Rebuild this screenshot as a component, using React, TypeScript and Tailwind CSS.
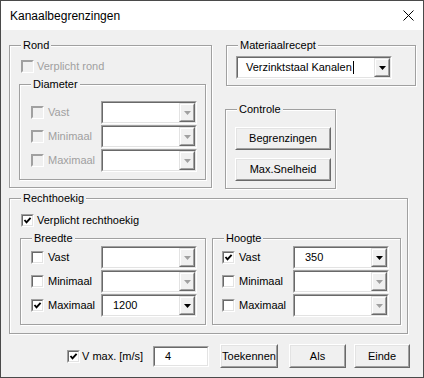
import React from "react";

const LABEL_DIS = "text-[#a0a0a0]";

function Group({
  label,
  className,
  children,
}: {
  label: string;
  className: string;
  children?: React.ReactNode;
}) {
  return (
    <div
      className={`relative border border-[#a0a0a0] shadow-[inset_1px_1px_0_#ffffff,1px_1px_0_#ffffff] ${className}`}
    >
      <span className="absolute top-[-8px] left-[11px] px-[2px] bg-[#f0f0f0] leading-[14px] text-black">
        {label}
      </span>
      {children}
    </div>
  );
}

function Check({ checked, disabled }: { checked?: boolean; disabled?: boolean }) {
  return (
    <span
      className={`block shrink-0 w-[13px] h-[13px] border ${
        disabled
          ? "border-t-[#a0a0a0] border-l-[#a0a0a0] border-b-white border-r-white"
          : "border-t-[#a0a0a0] border-l-[#a0a0a0] border-b-white border-r-white"
      }`}
    >
      <span
        className={`block w-full h-full border ${
          disabled
            ? "border-t-[#a0a0a0] border-l-[#a0a0a0] border-b-[#f0f0f0] border-r-[#f0f0f0] bg-[#f0f0f0]"
            : "border-t-[#696969] border-l-[#696969] border-b-[#e3e3e3] border-r-[#e3e3e3] bg-white"
        }`}
      >
        {checked && (
          <svg width="9" height="9" viewBox="0 0 9 9" className="block">
            <path d="M1.5 4 L3.5 6.3 L7.6 1.8" stroke="#000" strokeWidth="1.9" fill="none" />
          </svg>
        )}
      </span>
    </span>
  );
}

function Sunken({
  className,
  children,
}: {
  className: string;
  children?: React.ReactNode;
}) {
  return (
    <div
      className={`flex border border-t-[#a0a0a0] border-l-[#a0a0a0] border-b-white border-r-white ${className}`}
    >
      <div className="flex flex-1 min-w-0 border border-t-[#696969] border-l-[#696969] border-b-[#e3e3e3] border-r-[#e3e3e3] bg-white">
        {children}
      </div>
    </div>
  );
}

function Combo({
  value,
  enabled,
  w = "w-[96px]",
  pl = "pl-[10px]",
  caret,
}: {
  value?: string;
  enabled?: boolean;
  w?: string;
  pl?: string;
  caret?: boolean;
}) {
  return (
    <Sunken className={`${w} h-[23px]`}>
      <div className={`flex-1 flex items-center ${pl} text-black leading-none`}>
        {value}
        {caret && <span className="inline-block w-[1px] h-[13px] bg-black ml-[1px]" />}
      </div>
      <div className="w-[16px] h-full border border-t-[#e3e3e3] border-l-[#e3e3e3] border-b-[#696969] border-r-[#696969] bg-[#f0f0f0]">
        <div className="w-full h-full border border-t-white border-l-white border-b-[#a0a0a0] border-r-[#a0a0a0] flex items-center justify-center">
          <svg width="7" height="4" viewBox="0 0 7 4" className="block">
            <path d="M0 0 H7 L3.5 4 Z" fill={enabled ? "#000" : "#a0a0a0"} />
          </svg>
        </div>
      </div>
    </Sunken>
  );
}

function Button({ label, className }: { label: string; className: string }) {
  return (
    <div
      className={`border border-t-white border-l-white border-b-[#696969] border-r-[#696969] bg-[#f0f0f0] ${className}`}
    >
      <div className="w-full h-full border border-t-[#e3e3e3] border-l-[#e3e3e3] border-b-[#a0a0a0] border-r-[#a0a0a0] flex items-center justify-center text-black">
        {label}
      </div>
    </div>
  );
}

function Row({
  label,
  checked,
  disabled,
  comboEnabled,
  value,
  labelW,
}: {
  label: string;
  checked?: boolean;
  disabled?: boolean;
  comboEnabled?: boolean;
  value?: string;
  labelW: string;
}) {
  return (
    <div className="flex items-center h-[23px]">
      <Check checked={checked} disabled={disabled} />
      <span className={`ml-[4px] ${labelW} ${disabled ? LABEL_DIS : "text-black"}`}>{label}</span>
      <Combo value={value} enabled={comboEnabled} />
    </div>
  );
}

export default function App() {
  return (
    <div className="w-[424px] h-[378px] border border-[#4a4a4a] bg-[#f0f0f0] flex flex-col font-['Liberation_Sans',Arial,sans-serif] text-[11px] leading-[13px] select-none">
      {/* title bar */}
      <div className="h-[29px] bg-white flex items-center justify-between pl-[9px] pr-[8px]">
        <span className="text-[12px] text-black leading-none">Kanaalbegrenzingen</span>
        <svg width="11" height="11" viewBox="0 0 11 11" className="block mr-[1px]">
          <path d="M0.5 0.5 L10.5 10.5 M10.5 0.5 L0.5 10.5" stroke="#000" strokeWidth="1" />
        </svg>
      </div>

      <div className="flex flex-col pl-[8px]">
        {/* top row */}
        <div className="flex items-start mt-[15px]">
          <Group label="Rond" className="w-[203px] h-[143px] pl-[9px] pt-[14px]">
            <div className="flex items-center ml-[2px] h-[13px]">
              <Check disabled />
              <span className={`ml-[3px] ${LABEL_DIS}`}>Verplicht rond</span>
            </div>
            <Group label="Diameter" className="mt-[11px] w-[187px] h-[96px] pl-[11px] pt-[16px]">
              <div className="flex flex-col gap-[1px]">
                <Row label="Vast" disabled labelW="w-[53px]" />
                <Row label="Minimaal" disabled labelW="w-[53px]" />
                <Row label="Maximaal" disabled labelW="w-[53px]" />
              </div>
            </Group>
          </Group>

          <div className="ml-[14px] w-[190px] flex flex-col">
            <Group label="Materiaalrecept" className="h-[41px] pl-[9px] pt-[10px]">
              <Combo value="Verzinktstaal Kanalen" enabled caret w="w-[156px]" pl="pl-[8px]" />
            </Group>
            <Group label="Controle" className="mt-[23px] ml-[-1px] w-[111px] h-[80px] pl-[9px] pt-[17px]">
              <Button label="Begrenzingen" className="w-[96px] h-[23px]" />
              <Button label="Max.Snelheid" className="mt-[8px] w-[96px] h-[23px]" />
            </Group>
          </div>
        </div>

        {/* Rechthoekig */}
        <Group label="Rechthoekig" className="mt-[9px] w-[399px] h-[136px] pl-[10px] pt-[15px]">
          <div className="flex items-center ml-[1px] h-[13px]">
            <Check checked />
            <span className="ml-[3px] text-black">Verplicht rechthoekig</span>
          </div>
          <div className="flex mt-[11px]">
            <Group label="Breedte" className="w-[186px] h-[87px] pl-[10px] pt-[7px]">
              <div className="flex flex-col gap-[1px]">
                <Row label="Vast" labelW="w-[53px]" />
                <Row label="Minimaal" labelW="w-[53px]" />
                <Row label="Maximaal" checked comboEnabled value="1200" labelW="w-[53px]" />
              </div>
            </Group>
            <Group label="Hoogte" className="ml-[6px] w-[189px] h-[87px] pl-[9px] pt-[7px]">
              <div className="flex flex-col gap-[1px]">
                <Row label="Vast" checked comboEnabled value="350" labelW="w-[54px]" />
                <Row label="Minimaal" labelW="w-[54px]" />
                <Row label="Maximaal" labelW="w-[54px]" />
              </div>
            </Group>
          </div>
        </Group>

        {/* bottom row */}
        <div className="flex items-center mt-[10px] h-[24px]">
          <div className="ml-[58px]">
            <Check checked />
          </div>
          <span className="ml-[2px] w-[71px] text-black">V max. [m/s]</span>
          <Sunken className="w-[56px] h-[21px]">
            <div className="flex-1 flex items-center pl-[10px] text-black">4</div>
          </Sunken>
          <Button label="Toekennen" className="ml-[11px] w-[58px] h-[24px]" />
          <Button label="Als" className="ml-[11px] w-[57px] h-[24px]" />
          <Button label="Einde" className="ml-[8px] w-[56px] h-[24px]" />
        </div>
      </div>
    </div>
  );
}
